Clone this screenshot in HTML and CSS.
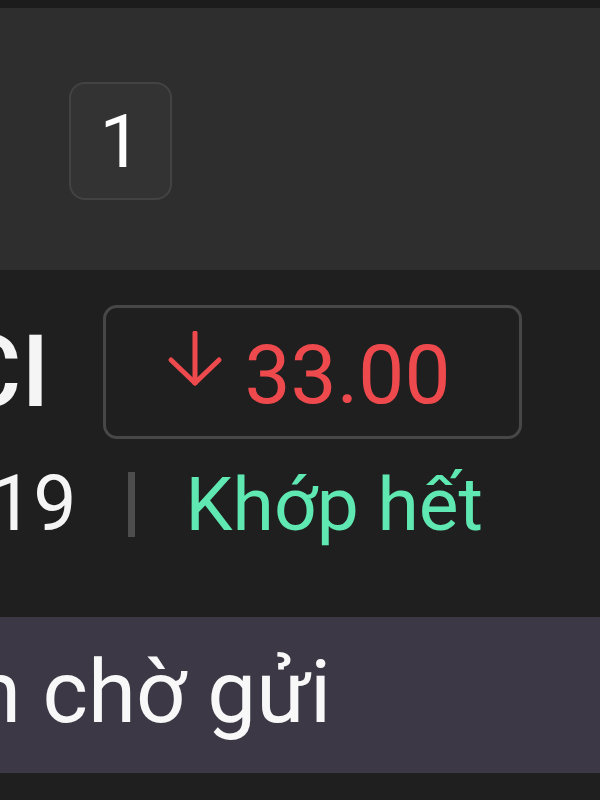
FILE: index.html
```html
<!DOCTYPE html>
<html>
<head>
  <title>Lệnh chờ gửi</title>
  <link rel="stylesheet" href="styles.css">
</head>
<body>
  <div class="top-strip"></div>

  <div class="tabs">
    <div class="tab-badge">1</div>
  </div>

  <div class="order">
    <div class="order-head">
      <div class="symbol">CI</div>
      <div class="price-box">
        <svg class="arrow" width="56" height="56" viewBox="0 0 56 56">
          <line x1="28" y1="2" x2="28" y2="52" />
          <polyline points="4,29 28,52 52,29" />
        </svg>
        <span class="price">33.00</span>
      </div>
    </div>
    <div class="order-info">
      <span class="qty">19</span>
      <span class="sep"></span>
      <span class="status">Khớp hết</span>
    </div>
  </div>

  <div class="pending">
    <span class="pending-title">Lệnh chờ gửi</span>
  </div>

  <div class="bottom-strip"></div>
</body>
</html>
```

FILE: styles.css
```css
body {
  margin: 0;
  padding: 0;
  background-color: #1f1f1f;
  font-family: Roboto, "Noto Sans", sans-serif;
  color: #f5f5f5;
  overflow: hidden;
}

.top-strip {
  height: 8px;
  background-color: #1c1c1c;
}

.tabs {
  height: 262px;
  background-color: #2e2e2e;
  display: flex;
  align-items: center;
  padding-left: 69px;
  box-sizing: border-box;
}

.tab-badge {
  width: 103px;
  height: 118px;
  box-sizing: border-box;
  border: 2px solid #434343;
  border-radius: 16px;
  background-color: #333333;
  display: flex;
  align-items: center;
  justify-content: center;
  font-size: 75px;
  color: #ffffff;
  margin-top: 4px;
}

.order {
  background-color: #1f1f1f;
  padding-top: 35px;
  height: 347px;
  box-sizing: border-box;
  overflow: hidden;
}

.order-head {
  display: flex;
  align-items: center;
}

.symbol {
  font-size: 100px;
  font-weight: 500;
  margin-left: -44px;
  width: 147px;
  white-space: nowrap;
  line-height: 1;
}

.price-box {
  width: 419px;
  height: 134px;
  box-sizing: border-box;
  border: 3px solid #474747;
  border-radius: 14px;
  display: flex;
  justify-content: center;
  align-items: center;
  gap: 22px;
  padding-right: 8px;
}

.arrow {
  align-self: flex-start;
  margin-top: 23px;
  fill: none;
  stroke: #ee4a4e;
  stroke-width: 5;
  stroke-linecap: round;
  stroke-linejoin: round;
}

.price {
  font-size: 82px;
  color: #ee4a4e;
  line-height: 1;
  margin-top: 6px;
}

.order-info {
  display: flex;
  align-items: center;
  margin-top: 20px;
  font-size: 77px;
  line-height: 90px;
}

.qty {
  margin-left: -10px;
  color: #f5f5f5;
}

.sep {
  width: 7px;
  height: 65px;
  background-color: #4d4d4d;
  margin: 0 51px 0 51px;
}

.status {
  font-size: 75px;
  color: #5fe8b1;
}

.pending {
  height: 156px;
  background-color: #3d3846;
  line-height: 150px;
  overflow: hidden;
  white-space: nowrap;
}

.pending-title {
  display: inline-block;
  margin-left: -168px;
  font-size: 87px;
  color: #f8f8f8;
}

.bottom-strip {
  height: 27px;
  background-color: #1f1f1f;
}
```
